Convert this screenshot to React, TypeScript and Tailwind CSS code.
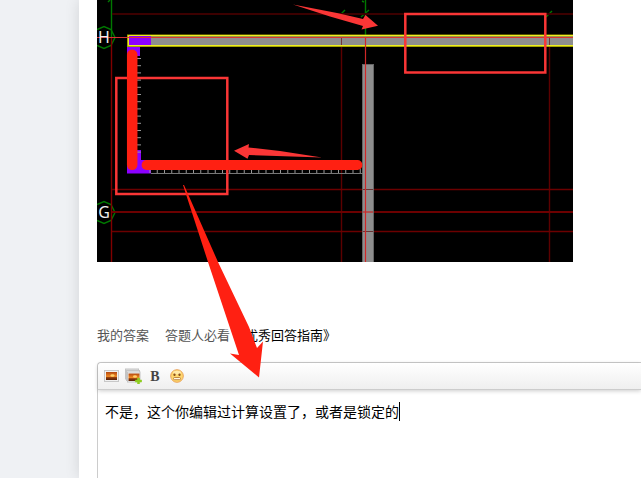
import type { ReactNode } from "react";

const xTicks = Array.from({ length: 30 }, (_, i) => 150 + i * 7.25);
const yTicks = Array.from({ length: 14 }, (_, i) => 58.5 + i * 7.2);

function FloorPlan() {
  return (
    <svg viewBox="97 0 476 262" className="block w-[476px] h-[262px] bg-black" role="img" aria-label="CAD">
      <g fill="none" stroke="#007800" strokeWidth="1.4">
        <path d="M111.5 0V38M365.5 0V38" />
        <path d="M97 29.5l7-3 7 3 4 8-4 8-7 3-7-3" />
        <path d="M97 204.5l7-3 7 3 4 8-4 8-7 3-7-3" />
        <path d="M341 14l4-4M361 17l8-7M546 17l6-6M108 2l2-2M362 1l2 1" />
      </g>

      {/* column grid */}
      <g fill="none" stroke="#6c0000" strokeWidth="1.4">
        <path d="M112 14H573" strokeWidth="2" stroke="#3c0000" />
        <path d="M111.5 38V262" stroke="#800000" />
        <path d="M341.5 38V262M549.5 38V262" stroke="#5c0000" />
        <path d="M112 189.5H573M112 231.5H573" />
        <path d="M112 212H573" strokeWidth="2" />
      </g>

      {/* walls */}
      <rect x="128" y="35.5" width="460" height="10.5" fill="#8e8e8e" stroke="#a6a600" strokeWidth="2" />
      <path d="M573 35.5H128.5V45.5H573" fill="none" stroke="#eeee22" />
      <rect x="129" y="36" width="22" height="9" fill="#8c00ff" />
      <path d="M341.5 38v7M549.5 38v7" stroke="#703838" />
      <rect x="127" y="47" width="13" height="9" fill="#8c00ff" />
      <rect x="362.5" y="64.5" width="11" height="200" fill="#8e8e8e" stroke="#666" />
      <path d="M363 189.5h10M363 231.5h10" stroke="#6c3434" />
      <path d="M363 212h10" stroke="#b05050" strokeWidth="2" />
      <path d="M97 37.5H573" stroke="#d93232" strokeWidth="1.2" />
      <path d="M365.5 38V262" stroke="#d02828" strokeWidth="1.2" />
      <path d="M127 150h14v10h10v13.5h-24z" fill="#8c00ff" />
      <path d="M151 173.5H363" stroke="#777" />
      <g stroke="#999">
        {xTicks.map((x) => (
          <line key={x} x1={x} x2={x} y1="169" y2="173" />
        ))}
        {yTicks.map((y) => (
          <line key={y} x1="137" x2="141" y1={y} y2={y} />
        ))}
      </g>

      {/* mark-up */}
      <g fill="none" stroke="#fa3636" strokeWidth="2.5">
        <rect x="116.3" y="78" width="111" height="116" />
        <rect x="405.3" y="14" width="140" height="58.5" />
      </g>
      <g fill="#fa3636">
        <path d="M293 4.5L337 13L363 19L365.5 15L378 25.7L361.5 29.5L363 26L330 16.5z" />
        <path d="M322 157.5L280 151L248.5 147.5L249 144L234 150.7L247.5 158.7L249 155z" />
      </g>
      <g stroke="#ff2012" strokeLinecap="round">
        <path d="M132.2 54.8V164.8" strokeWidth="10.5" />
        <path d="M146.5 165H357.5" strokeWidth="9.8" />
      </g>

      <g fill="#eee" fontFamily="'Noto Sans', sans-serif" fontSize="16" textAnchor="middle">
        <text x="104" y="43">H</text>
        <text x="104" y="218">G</text>
      </g>
    </svg>
  );
}

function PhotoIcon() {
  return (
    <svg viewBox="0 0 16 16" className="size-4" aria-hidden="true">
      <defs>
        <linearGradient id="sunset" x1="0" y1="0" x2="0" y2="1">
          <stop offset="0" stopColor="#b2470f" />
          <stop offset=".55" stopColor="#f28a25" />
          <stop offset=".7" stopColor="#8c3a0c" />
          <stop offset="1" stopColor="#57220b" />
        </linearGradient>
      </defs>
      <rect x="1.5" y="2.5" width="14" height="11" fill="#f1f1f1" stroke="#c8c8c8" />
      <rect x="3" y="4" width="11" height="8" fill="url(#sunset)" />
      <ellipse cx="9.5" cy="7.5" rx="2" ry="1.3" fill="#ffd06a" />
    </svg>
  );
}

function PhotosIcon() {
  return (
    <svg viewBox="0 0 17 16" className="h-4 w-[17px]" aria-hidden="true">
      <rect x=".5" y="1" width="13" height="10" fill="#dedede" stroke="#c4c4c4" />
      <rect x="1.5" y="2.5" width="13" height="10" fill="#eee" stroke="#c4c4c4" />
      <rect x="2.5" y="4" width="12.5" height="10" fill="#f5f5f5" stroke="#c4c4c4" />
      <rect x="3.5" y="5.5" width="11" height="7.5" fill="url(#sunset)" />
      <ellipse cx="10" cy="8.5" rx="2" ry="1.2" fill="#ffd06a" />
      <path d="M12.5 10h2v2h2.2v2h-2.2v2h-2v-2h-2.2v-2h2.2z" fill="#8fce1e" stroke="#8fce1e" strokeWidth=".5" />
    </svg>
  );
}

function SmileyIcon() {
  return (
    <svg viewBox="0 0 16 16" className="size-4" aria-hidden="true">
      <circle cx="8" cy="8" r="6.3" fill="#ffd76c" stroke="#eaa45c" />
      <ellipse cx="8" cy="4.5" rx="4" ry="1.8" fill="#ffe9a8" />
      <g fill="#8a4f1c">
        <rect x="4.5" y="5.5" width="2" height="2.5" rx=".8" />
        <rect x="9.5" y="5.5" width="2" height="2.5" rx=".8" />
      </g>
      <rect x="4.5" y="9.5" width="7" height="2.2" rx="1" fill="#fff8e0" stroke="#b0702f" strokeWidth=".8" />
    </svg>
  );
}

function ToolButton({ label, children }: { label: string; children: ReactNode }) {
  return (
    <button type="button" aria-label={label} className="flex size-5 items-center justify-center">
      {children}
    </button>
  );
}

function Editor() {
  return (
    <div className="flex-1 rounded-tl border-t border-l border-[#ccc]">
      <div className="flex h-[27px] items-center gap-0.5 rounded-tl border-b border-[#ccc] bg-linear-to-b from-white to-[#efefef] pl-[3px] shadow-[0_1px_4px_rgba(0,0,0,0.2)]">
        <ToolButton label="图片">
          <PhotoIcon />
        </ToolButton>
        <ToolButton label="多图">
          <PhotosIcon />
        </ToolButton>
        <ToolButton label="加粗">
          <span className="font-['Liberation_Serif',serif] text-[14px] font-bold text-[#444]">B</span>
        </ToolButton>
        <ToolButton label="表情">
          <SmileyIcon />
        </ToolButton>
      </div>
      <div className="flex items-center pt-[11px] pl-[7px]">
        <textarea
          aria-label="我的答案"
          rows={1}
          className="field-sizing-content resize-none overflow-hidden text-[14px] leading-5 text-black outline-none"
          defaultValue="不是，这个你编辑过计算设置了，或者是锁定的"
        />
        <span className="h-[19px] w-px bg-black" />
      </div>
    </div>
  );
}

export default function App() {
  return (
    <div className="flex h-screen overflow-hidden bg-[#eff1f4] font-['Noto_Sans_CJK_SC',sans-serif]">
      <aside className="w-[79px] shrink-0" />
      <main className="relative flex flex-1 flex-col bg-white pl-[18px] shadow-[0_0_14px_rgba(0,0,0,0.12)]">
        <FloorPlan />
        <div className="mt-[63px] flex h-5 items-center text-[13px] text-[#555]">
          <span>我的答案</span>
          <span className="ml-4">答题人必看</span>
          <a href="#guide" className="ml-0.5 text-black">
            《优秀回答指南》
          </a>
        </div>
        <div className="mt-[17px] flex flex-1">
          <Editor />
        </div>
        {/* arrow from the plan down to the answer */}
        <svg viewBox="0 0 80 200" className="pointer-events-none absolute top-[180px] left-[104px] h-[200px] w-20" aria-hidden="true">
          <path d="M0 5L1 5L35 82L66 147L74 168L80 161.5L76 197.5L47 173.5L56 175L25 82z" fill="#ff2012" />
        </svg>
      </main>
    </div>
  );
}
